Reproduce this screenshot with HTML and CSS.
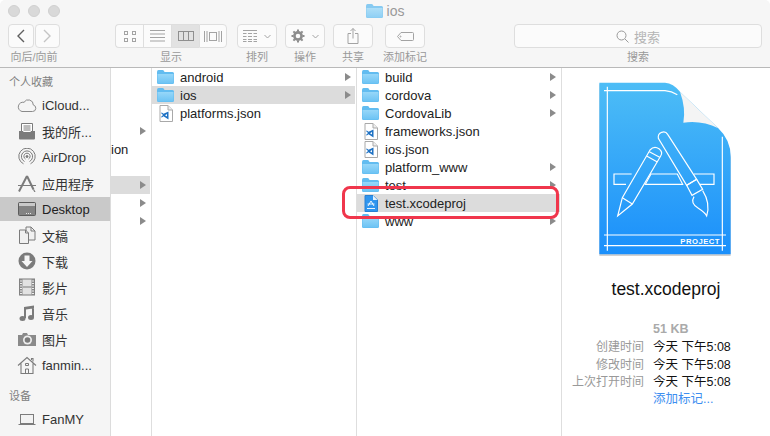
FILE: index.html
```html
<!DOCTYPE html>
<html lang="zh-CN">
<head>
    <meta charset="UTF-8">
    <title>ios</title>
    <link rel="stylesheet" href="styles.css">
</head>
<body>
    <svg class="defs" width="0" height="0">
        <defs>
            <linearGradient id="folderFill" x1="0" y1="0" x2="0" y2="1">
                <stop offset="0" stop-color="#97d7f9"/>
                <stop offset="1" stop-color="#6cc3f4"/>
            </linearGradient>
            <linearGradient id="docFill" x1="0" y1="0" x2="0" y2="1">
                <stop offset="0" stop-color="#4dbdf6"/>
                <stop offset="1" stop-color="#1a8ffb"/>
            </linearGradient>
            <symbol id="folder" viewBox="0 0 17 14">
                <path d="M0 2q0-2 1.500-2h4q1 0 1.500 1l.5 1h8q1.500 0 1.500 1.500v9q0 1.500-1.500 1.500h-14q-1.500 0-1.500-1.500z" fill="#62bcf0"/>
                <path d="M.5 4h16v8.500q0 1-1 1h-14q-1 0-1-1z" fill="url(#folderFill)"/>
            </symbol>
            <symbol id="jsonfile" viewBox="0 0 14 17">
                <path d="M1 .5h8l4.500 4.500v11.500h-12.500z" fill="#fff" stroke="#a9a9a9"/>
                <path d="M9 .5v4.500h4.500" fill="#eee" stroke="#a9a9a9"/>
                <path d="M9.500 6.500v8l-5-3.200-1.700 1.300-.8-.6 2-2-2-2 .8-.6 1.700 1.300zM8 9l-2 1.300 2 1.300z" fill="#1f72c4"/>
            </symbol>
            <symbol id="xcfile" viewBox="0 0 14 17">
                <path d="M1 .5h8l4.500 4.500v11.500h-12.500z" fill="#2f95ee" stroke="#2a80d2"/>
                <path d="M9 .5v4.500h4.500z" fill="#e6f3fd"/>
                <path d="M3 13.500h8M4 11l3-5 3 5M3.500 9h7" fill="none" stroke="#fff" stroke-width=".9"/>
            </symbol>
            <symbol id="arrow" viewBox="0 0 6 8">
                <path d="M0 0l6 4-6 4z"/>
            </symbol>
        </defs>
    </svg>

    <div class="window">
        <header class="toolbar">
            <div class="titlebar">
                <div class="lights"><i></i><i></i><i></i></div>
                <div class="title">
                    <svg class="title-folder" width="17" height="14"><use href="#folder"/></svg>
                    <span>ios</span>
                </div>
            </div>
            <div class="tools">
                <div class="tool tool-nav">
                    <div class="btn-group">
                        <div class="btn seg-nav"><svg width="10" height="14" viewBox="0 0 10 14"><path d="M8 1L2 7l6 6" fill="none" stroke="#5f5f5f" stroke-width="1.400"/></svg></div>
                        <div class="btn seg-nav"><svg width="10" height="14" viewBox="0 0 10 14"><path d="M2 1l6 6-6 6" fill="none" stroke="#c4c4c4" stroke-width="1.400"/></svg></div>
                    </div>
                    <span class="tool-label">向后/向前</span>
                </div>
                <div class="tool tool-view">
                    <div class="btn-group joined">
                        <div class="btn seg-view"><svg width="14" height="14" viewBox="0 0 14 14" fill="none" stroke="#a3a3a3"><rect x="1.500" y="2.500" width="3" height="3"/><rect x="9.500" y="2.500" width="3" height="3"/><rect x="1.500" y="9.500" width="3" height="3"/><rect x="9.500" y="9.500" width="3" height="3"/></svg></div>
                        <div class="btn seg-view"><svg width="15" height="12" viewBox="0 0 15 12" fill="none" stroke="#a3a3a3"><path d="M0 .5h15M0 4h15M0 7.500h15M0 11h15"/></svg></div>
                        <div class="btn seg-view is-on"><svg width="16" height="10" viewBox="0 0 16 10" fill="none" stroke="#8f8f8f"><rect x=".5" y=".5" width="15" height="9"/><path d="M5.500 0v10M10.500 0v10"/></svg></div>
                        <div class="btn seg-view"><svg width="18" height="11" viewBox="0 0 18 11" fill="none" stroke="#a3a3a3"><rect x="5.500" y="1.500" width="7" height="8"/><path d="M.5 0v11M3 0v11M15 0v11M17.500 0v11"/></svg></div>
                    </div>
                    <span class="tool-label">显示</span>
                </div>
                <div class="tool tool-arrange">
                    <div class="btn">
                        <svg width="14" height="12" viewBox="0 0 14 12" fill="none" stroke="#a3a3a3"><path d="M0 .5h14M0 3.500h3.500M5 3.500h4M10.500 3.500H14M0 6.500h3.500M5 6.500h4M10.500 6.500H14M0 9.500h3.500M5 9.500h4M10.500 9.500H14M0 11.500h3.500M5 11.500h4M10.500 11.500H14"/></svg>
                        <svg class="caret" width="7" height="5" viewBox="0 0 7 5"><path d="M.5 1l3 3 3-3" fill="none" stroke="#a3a3a3"/></svg>
                    </div>
                    <span class="tool-label">排列</span>
                </div>
                <div class="tool tool-action">
                    <div class="btn">
                        <svg width="14" height="14" viewBox="0 0 14 14"><circle cx="7" cy="7" r="3.600" fill="none" stroke="#8d8d8d" stroke-width="2.600"/><path d="M7 7V.5M7 7v6.500M7 7H.5M7 7h6.500M7 7L2.400 2.400M7 7l4.600 4.600M7 7l4.600-4.600M7 7l-4.600 4.600" stroke="#8d8d8d" stroke-width="2" stroke-dasharray="0 4.500 2.500"/></svg>
                        <svg class="caret" width="7" height="5" viewBox="0 0 7 5"><path d="M.5 1l3 3 3-3" fill="none" stroke="#a3a3a3"/></svg>
                    </div>
                    <span class="tool-label">操作</span>
                </div>
                <div class="tool tool-share">
                    <div class="btn"><svg width="12" height="16" viewBox="0 0 12 16" fill="none" stroke="#a3a3a3"><path d="M4 5.500H1v10h10v-10H8M6 10.500V.5M3.500 3L6 .5 8.500 3"/></svg></div>
                    <span class="tool-label">共享</span>
                </div>
                <div class="tool tool-tag">
                    <div class="btn"><svg width="17" height="9" viewBox="0 0 17 9" fill="none" stroke="#a3a3a3"><path d="M4 .5h11.500q1 0 1 1v6q0 1-1 1H4L.5 4.500z"/><circle cx="3.500" cy="4.500" r=".5"/></svg></div>
                    <span class="tool-label">添加标记</span>
                </div>
                <div class="tool tool-search">
                    <div class="btn search-box">
                        <svg width="13" height="13" viewBox="0 0 13 13" fill="none" stroke="#9a9a9a"><circle cx="5.500" cy="5.500" r="4.500"/><path d="M9 9l3.500 3.500"/></svg>
                        <span>搜索</span>
                    </div>
                    <span class="tool-label">搜索</span>
                </div>
            </div>
        </header>

        <main class="content">
            <nav class="sidebar">
                <h2 class="side-head">个人收藏</h2>
                <ul class="side-list">
                    <li class="side-item">
                        <svg viewBox="0 0 20 18" fill="none" stroke="#8a8a8a"><path d="M5 15.500h10.500a3.300 3.300 0 0 0 .8-6.500A5 5 0 0 0 7 6.300a4.700 4.700 0 0 0-2 9.200z"/></svg>
                        iCloud...
                    </li>
                    <li class="side-item">
                        <svg viewBox="0 0 20 18"><path d="M4.500 1.500h11v9h-11z" fill="#fff" stroke="#7b7b7b"/><path d="M6.500 4h7M6.500 6h7M6.500 8h7" stroke="#7b7b7b"/><path d="M2 9h4l1 2h6l1-2h4v7.500q0 1-1 1H3q-1 0-1-1z" fill="#7b7b7b"/></svg>
                        我的所...
                    </li>
                    <li class="side-item">
                        <svg viewBox="0 0 20 18" fill="none" stroke="#7b7b7b"><path d="M6.500 15.800a8.200 8.200 0 1 1 7 0"/><path d="M7.500 13.500a5.600 5.600 0 1 1 5 0"/><path d="M8.500 11a3.100 3.100 0 1 1 3 0"/><circle cx="10" cy="8.500" r="1" fill="#7b7b7b"/></svg>
                        AirDrop
                    </li>
                    <li class="side-item">
                        <svg viewBox="0 0 20 18" fill="none" stroke="#7b7b7b"><path d="M10 2L3 15.500M3 15.500l-1 2" stroke-width="2"/><path d="M10 2l6.500 13.500" stroke-width="2"/><path d="M16.500 15.500l1.500 2.500M1 11.500h18M6 11.500h8" stroke-width="1.200"/></svg>
                        应用程序
                    </li>
                    <li class="side-item is-current">
                        <svg viewBox="0 0 20 18"><rect x="1.500" y="2.500" width="17" height="13" rx="1" fill="#838383" stroke="#5c5c5c"/><rect x="2" y="3" width="16" height="3" fill="#c9c9c9"/><path d="M9 13.500h1M11 13.500h1M13 13.500h1" stroke="#e5e5e5"/></svg>
                        Desktop
                    </li>
                    <li class="side-item">
                        <svg viewBox="0 0 20 18" fill="#f0f0f0" stroke="#7b7b7b"><path d="M9 1h5l4 4v9h-9z"/><path d="M2.500 4h6l3 3v10.500h-9z"/><path d="M8.500 4v3h3M14 1v4h4" fill="none"/></svg>
                        文稿
                    </li>
                    <li class="side-item">
                        <svg viewBox="0 0 20 18"><circle cx="10" cy="9" r="8.500" fill="#7b7b7b"/><path d="M7.500 3.500h5V9h3L10 15 4.500 9h3z" fill="#f5f5f5"/></svg>
                        下载
                    </li>
                    <li class="side-item">
                        <svg viewBox="0 0 20 18"><rect x="2.500" y="1" width="15" height="16" fill="#e2e2e2" stroke="#7b7b7b"/><rect x="2.500" y="1" width="3" height="16" fill="#8a8a8a"/><rect x="14.500" y="1" width="3" height="16" fill="#8a8a8a"/><path d="M6 9h8.500" stroke="#7b7b7b"/><path d="M3 3h2M3 5.500h2M3 8h2M3 10.500h2M3 13h2M3 15.500h2M15 3h2M15 5.500h2M15 8h2M15 10.500h2M15 13h2M15 15.500h2" stroke="#eee"/></svg>
                        影片
                    </li>
                    <li class="side-item">
                        <svg viewBox="0 0 20 18"><path d="M7 3l10-1.500v2.700l-8 1.200V14h-2zM15 2h2v11h-2z" fill="#7b7b7b"/><ellipse cx="5.500" cy="14.500" rx="3" ry="2.500" fill="#7b7b7b"/><ellipse cx="14" cy="13.500" rx="3" ry="2.500" fill="#7b7b7b"/></svg>
                        音乐
                    </li>
                    <li class="side-item">
                        <svg viewBox="0 0 20 18"><path d="M1 5h4l1-2h4l1 2h8v11H1z" fill="#8a8a8a"/><circle cx="10.500" cy="10" r="4.500" fill="#eee"/><circle cx="10.500" cy="10" r="2.800" fill="#7b7b7b"/></svg>
                        图片
                    </li>
                    <li class="side-item">
                        <svg viewBox="0 0 20 18" fill="none" stroke="#7b7b7b"><path d="M1 9.500L10 1.500l9 8M4 7.500v10h12v-10M14.500 4V2.500H16v3" stroke-width="1.100"/><path d="M8.500 17.500V13h3v4.500M8.500 7.500h3v2h-3z"/></svg>
                        fanmin...
                    </li>
                </ul>
                <h2 class="side-head side-head-devices">设备</h2>
                <ul class="side-list">
                    <li class="side-item">
                        <svg viewBox="0 0 20 18"><rect x="3.500" y="4.500" width="13" height="9" fill="#f2f2f2" stroke="#7b7b7b"/><path d="M1.500 14h17v1h-17z" fill="#7b7b7b"/></svg>
                        FanMY
                    </li>
                </ul>
            </nav>

            <section class="col col-first">
                <div class="row"></div>
                <div class="row"></div>
                <div class="row"></div>
                <div class="row"><svg class="row-arrow"><use href="#arrow"/></svg></div>
                <div class="row"><span class="cut">ion</span></div>
                <div class="row"></div>
                <div class="row is-on"><svg class="row-arrow"><use href="#arrow"/></svg></div>
                <div class="row"><svg class="row-arrow"><use href="#arrow"/></svg></div>
                <div class="row"><svg class="row-arrow"><use href="#arrow"/></svg></div>
            </section>

            <section class="col">
                <div class="row"><svg class="ic-folder"><use href="#folder"/></svg>android<svg class="row-arrow"><use href="#arrow"/></svg></div>
                <div class="row is-on"><svg class="ic-folder"><use href="#folder"/></svg>ios<svg class="row-arrow"><use href="#arrow"/></svg></div>
                <div class="row"><svg class="ic-file"><use href="#jsonfile"/></svg>platforms.json</div>
            </section>

            <section class="col">
                <div class="row"><svg class="ic-folder"><use href="#folder"/></svg>build<svg class="row-arrow"><use href="#arrow"/></svg></div>
                <div class="row"><svg class="ic-folder"><use href="#folder"/></svg>cordova<svg class="row-arrow"><use href="#arrow"/></svg></div>
                <div class="row"><svg class="ic-folder"><use href="#folder"/></svg>CordovaLib<svg class="row-arrow"><use href="#arrow"/></svg></div>
                <div class="row"><svg class="ic-file"><use href="#jsonfile"/></svg>frameworks.json</div>
                <div class="row"><svg class="ic-file"><use href="#jsonfile"/></svg>ios.json</div>
                <div class="row"><svg class="ic-folder"><use href="#folder"/></svg>platform_www<svg class="row-arrow"><use href="#arrow"/></svg></div>
                <div class="row"><svg class="ic-folder"><use href="#folder"/></svg>test<svg class="row-arrow"><use href="#arrow"/></svg></div>
                <div class="row is-on"><svg class="ic-file"><use href="#xcfile"/></svg>test.xcodeproj</div>
                <div class="row"><svg class="ic-folder"><use href="#folder"/></svg>www<svg class="row-arrow"><use href="#arrow"/></svg></div>
            </section>

            <aside class="preview">
                <svg class="doc" width="170" height="200" viewBox="0 0 510 600">
                    <path d="M28 38H225Q250 40 270 65L385 175Q422 210 422 260V553H28Z" fill="#000" opacity=".18" transform="translate(0 5)"/>
                    <path d="M28 38H225Q250 40 270 65L385 175Q422 210 422 260V553H28Z" fill="url(#docFill)"/>
                    <g fill="none" stroke="#fff" stroke-width="3.500">
                        <path d="M42 62H225Q245 64 262 74M52 50V542M397 200V542M42 495H408M42 527H408"/>
                        <path d="M125 312H72V343H108M183 312H262L278 343H166ZM312 312H372V343H330"/>
                        <path d="M83 438L97 383L180 240Q192 226 207 236Q220 246 212 258L127 402Z"/>
                        <path d="M97 383L127 402M170 258L202 276M178 245L209 262"/>
                        <path d="M205 205Q203 192 215 187Q227 183 233 193L320 328L290 346Z"/>
                        <path d="M290 346L320 328L338 358L306 376ZM312 380Q300 400 325 415Q345 428 350 438Q362 400 338 362"/>
                    </g>
                    <path d="M270 65Q288 115 280 158Q335 150 385 175Z" fill="#f4f4f4"/>
                    <text class="doc-label" x="390" y="522" text-anchor="end">PROJECT</text>
                </svg>
                <div class="file-name">test.xcodeproj</div>
                <dl class="meta">
                    <dt></dt><dd class="meta-size">51 KB</dd>
                    <dt>创建时间</dt><dd>今天 下午5:08</dd>
                    <dt>修改时间</dt><dd>今天 下午5:08</dd>
                    <dt>上次打开时间</dt><dd>今天 下午5:08</dd>
                    <dt></dt><dd class="meta-link">添加标记...</dd>
                </dl>
            </aside>
        </main>

        <div class="callout"></div>
    </div>
</body>
</html>
```

FILE: styles.css
```css
* {
    box-sizing: border-box;
}
html, body {
    margin: 0;
    height: 100%;
    background-color: #ffffff;
}
body {
    font-family: "Liberation Sans", "Noto Sans CJK SC", sans-serif;
    font-size: 13px;
    color: #222;
    overflow: hidden;
}
.defs {
    position: absolute;
}
.window {
    position: relative;
    display: flex;
    flex-direction: column;
    height: 436px;
}

/* toolbar */
.toolbar {
    height: 68px;
    flex: none;
    background-color: #f6f6f6;
    border-bottom: 1px solid #b9b9b9;
    border-radius: 5px 5px 0 0;
}
.titlebar {
    display: grid;
    grid-template-columns: 1fr auto 1fr;
    align-items: center;
    height: 24px;
    padding: 0 8px;
    padding-bottom: 2px;
}
.lights {
    display: flex;
    gap: 8px;
}
.lights i {
    width: 12px;
    height: 12px;
    border-radius: 50%;
    background-color: #d9d9d9;
    border: 1px solid #d0d0d0;
}
.title {
    display: flex;
    align-items: center;
    gap: 4px;
    color: #9a9a9a;
    font-size: 14px;
}
.title-folder {
    opacity: .75;
}
.tools {
    display: flex;
    padding-left: 8px;
}
.tool {
    display: flex;
    flex-direction: column;
    align-items: center;
    flex: none;
}
.tool-label {
    margin-top: 2px;
    font-size: 11px;
    line-height: 15px;
    color: #999;
    white-space: nowrap;
}
.btn {
    display: flex;
    align-items: center;
    justify-content: center;
    width: 100%;
    height: 24px;
    background-color: #fbfbfb;
    border: 1px solid #dedede;
    border-radius: 4px;
}
.btn-group {
    display: flex;
    gap: 1px;
    width: 100%;
}
.btn-group.joined {
    gap: 0;
}
.joined .btn {
    border-radius: 0;
    border-right: 0;
}
.joined .btn:first-child {
    border-radius: 4px 0 0 4px;
}
.joined .btn:last-child {
    border-radius: 0 4px 4px 0;
    border-right: 1px solid #dedede;
}
.btn.is-on {
    background-color: #e2e2e2;
}
.seg-nav {
    flex: 1;
}
.seg-view {
    width: 28px;
    flex: none;
}
.caret {
    margin-left: 7px;
}
.tool-nav {
    width: 52px;
}
.tool-view {
    width: 112px;
    margin-left: 55px;
}
.tool-arrange {
    width: 40px;
    margin-left: 10px;
}
.tool-action {
    width: 40px;
    margin-left: 8px;
}
.tool-share {
    width: 40px;
    margin-left: 8px;
}
.tool-tag {
    width: 40px;
    margin-left: 12px;
}
.tool-search {
    width: 248px;
    margin-left: 89px;
}
.search-box {
    gap: 5px;
    color: #b5b5b5;
    font-size: 13px;
}

/* main area */
.content {
    display: flex;
    flex: 1;
    min-height: 0;
}
.sidebar {
    width: 111px;
    flex: none;
    padding-top: 6px;
    background-color: #f5f5f5;
    border-right: 1px solid #dcdcdc;
}
.side-head {
    margin: 0 0 3px;
    padding-left: 9px;
    font-size: 11px;
    font-weight: normal;
    line-height: 16px;
    color: #808080;
}
.side-head-devices {
    margin-top: 11px;
}
.side-list {
    display: flex;
    flex-direction: column;
    gap: 2px;
    margin: 0;
    padding: 0;
    list-style: none;
}
.side-item {
    display: flex;
    align-items: center;
    gap: 5px;
    height: 24px;
    padding-left: 17px;
    color: #333;
    white-space: nowrap;
}
.side-item svg {
    width: 20px;
    height: 18px;
    flex: none;
}
.side-item.is-current {
    background-color: #c9c9c9;
    color: #222;
}
.col {
    width: 205px;
    flex: none;
    padding-right: 1px;
    border-right: 1px solid #dedede;
    background-color: #fff;
}
.col-first {
    width: 41px;
    overflow: hidden;
}
.row {
    display: flex;
    align-items: center;
    height: 18px;
    padding: 0 4px 0 5px;
    color: #222;
    white-space: nowrap;
}
.row.is-on {
    background-color: #dcdcdc;
}
.cut {
    margin-left: -5px;
}
.ic-folder {
    width: 17px;
    height: 14px;
    margin-right: 6px;
    flex: none;
}
.ic-file {
    width: 14px;
    height: 17px;
    margin: 0 7px 0 2px;
    flex: none;
}
.row-arrow {
    width: 6px;
    height: 8px;
    margin-left: auto;
    flex: none;
    fill: #8b8b8b;
}

/* preview pane */
.preview {
    display: flex;
    flex: 1;
    flex-direction: column;
    align-items: center;
    padding-top: 2px;
}
.doc {
    flex: none;
    align-self: flex-start;
    margin-left: 28px;
}
.doc-label {
    font-family: "Liberation Sans", sans-serif;
    font-size: 23px;
    font-weight: bold;
    letter-spacing: 1.500px;
    fill: #fff;
}
.file-name {
    margin-top: 9px;
    font-size: 17.500px;
    line-height: 21px;
    color: #111;
}
.meta {
    display: grid;
    grid-template-columns: 82px auto;
    column-gap: 9px;
    grid-auto-rows: 17.250px;
    align-items: center;
    align-self: stretch;
    margin: 20px 0 0;
    font-size: 12.500px;
    color: #111;
}
.meta dt {
    font-size: 12px;
    text-align: right;
    color: #999;
    white-space: nowrap;
}
.meta dd {
    margin: 0;
    white-space: nowrap;
}
.meta-size {
    font-weight: bold;
    color: #aaa;
}
.meta-link {
    color: #3d8ef0;
}

/* red annotation drawn over the screenshot */
.callout {
    position: absolute;
    left: 342px;
    top: 186px;
    width: 217px;
    height: 33px;
    border: 3px solid #f0364c;
    border-radius: 8px;
}
```
